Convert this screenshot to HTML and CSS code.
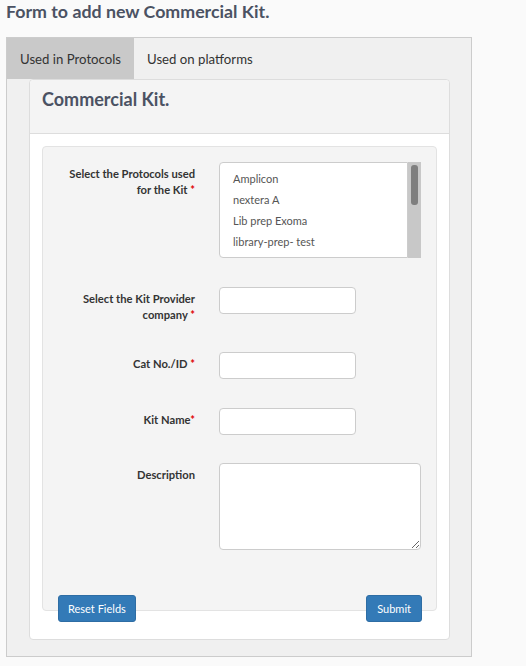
FILE: index.html
```html
<!DOCTYPE html>
<html>
<head>
<meta charset="utf-8">
<link rel="stylesheet" href="styles.css">
</head>
<body>
<h1 class="page-title">Form to add new Commercial Kit.</h1>
<div class="tabs-box">
  <div class="tab-bar">
    <div class="tab active">Used in Protocols</div>
    <div class="tab">Used on platforms</div>
  </div>
  <div class="tab-panel">
    <div class="card">
      <div class="card-header"><h3 class="card-title">Commercial Kit.</h3></div>
      <div class="card-body">
        <div class="well">
          <div class="form-row">
            <label class="form-label">Select the Protocols used for the Kit&nbsp;<span class="req">*</span></label>
            <div class="listbox">
              <div class="options">
                <div class="option">Amplicon</div>
                <div class="option">nextera A</div>
                <div class="option">Lib prep Exoma</div>
                <div class="option">library-prep- test</div>
              </div>
              <div class="scroll-track"><div class="scroll-thumb"></div></div>
            </div>
          </div>
          <div class="form-row">
            <label class="form-label">Select the Kit Provider company&nbsp;<span class="req">*</span></label>
            <input class="text-input" type="text">
          </div>
          <div class="form-row">
            <label class="form-label">Cat No./ID&nbsp;<span class="req">*</span></label>
            <input class="text-input" type="text">
          </div>
          <div class="form-row row-kit">
            <label class="form-label">Kit Name<span class="req">*</span></label>
            <input class="text-input" type="text">
          </div>
          <div class="form-row">
            <label class="form-label">Description</label>
            <textarea class="text-area"></textarea>
          </div>
        </div>
        <div class="button-row">
          <button class="btn">Reset Fields</button>
          <button class="btn btn-submit">Submit</button>
        </div>
      </div>
    </div>
  </div>
</div>
</body>
</html>
```
FILE: styles.css
```css
* { box-sizing: border-box; }
body {
  margin: 0;
  background: #fafafa;
  font-family: Lato, "Open Sans", sans-serif;
  color: #333;
}
.page-title {
  margin: 0;
  padding: 0 0 0 6px;
  height: 37px;
  font-size: 17.8px;
  line-height: 22px;
  font-weight: 700;
  color: #4b5263;
}
.tabs-box {
  margin-left: 6px;
  width: 466px;
  border: 1px solid #cccccc;
  background: #f0f0f0;
}
.tab-bar {
  display: flex;
  height: 41px;
}
.tab {
  display: flex;
  align-items: center;
  padding: 0 13px;
  font-size: 13.2px;
  color: #333;
  white-space: nowrap;
}
.tab.active {
  background: #c9c9c9;
  width: 127px;
}
.tab-panel {
  padding: 0 21px 16px 22px;
}
.card {
  background: #fff;
  border: 1px solid #dddddd;
  border-radius: 4px;
}
.card-header {
  height: 54px;
  background: #f4f4f4;
  border-bottom: 1px solid #dddddd;
  border-radius: 4px 4px 0 0;
  padding: 8px 12px 0;
}
.card-title {
  margin: 0;
  font-size: 18px;
  line-height: 22px;
  font-weight: 700;
  color: #4b5263;
}
.card-body {
  padding: 12px 12px 17px;
}
.well {
  background: #f4f4f4;
  border: 1px solid #e3e3e3;
  border-radius: 4px;
  padding: 15px 14px 60px 15px;
}
.form-row {
  display: grid;
  grid-template-columns: 137px 1fr;
  column-gap: 24px;
  align-items: start;
  margin-bottom: 29px;
}
.form-row.row-kit { margin-bottom: 28px; }
.form-row:last-child { margin-bottom: 0; }
.form-label {
  padding-top: 4px;
  text-align: right;
  font-size: 11.2px;
  line-height: 16px;
  font-weight: 700;
  color: #333;
}
.req { color: #e00000; }
.listbox {
  display: flex;
  width: 202px;
  height: 96px;
}
.options {
  flex: 1;
  background: #fff;
  border: 1px solid #cccccc;
  border-radius: 4px 0 0 4px;
  padding: 5px 13px;
}
.option {
  font-size: 11px;
  line-height: 21px;
  color: #555;
}
.scroll-track {
  width: 13px;
  background: #c8c8c8;
  padding: 3px 3px 0 3px;
}
.scroll-thumb {
  height: 40px;
  background: #7f7f7f;
  border-radius: 3px;
}
.text-input {
  display: block;
  width: 137px;
  height: 27px;
  margin: 0;
  border: 1px solid #cccccc;
  border-radius: 4px;
  background: #fff;
}
.text-area {
  display: block;
  width: 202px;
  height: 87px;
  margin: 0;
  border: 1px solid #cccccc;
  border-radius: 4px;
  background: #fff;
  resize: both;
}
.button-row {
  display: flex;
  justify-content: space-between;
  margin-top: -16px;
  padding: 0 15px 0 16px;
}
.btn {
  height: 27px;
  padding: 0 9px;
  font-family: inherit;
  font-size: 11px;
  color: #fff;
  background: #337ab7;
  border: 1px solid #2e6da4;
  border-radius: 3px;
}
.btn-submit {
  padding: 0 10px;
}
```
